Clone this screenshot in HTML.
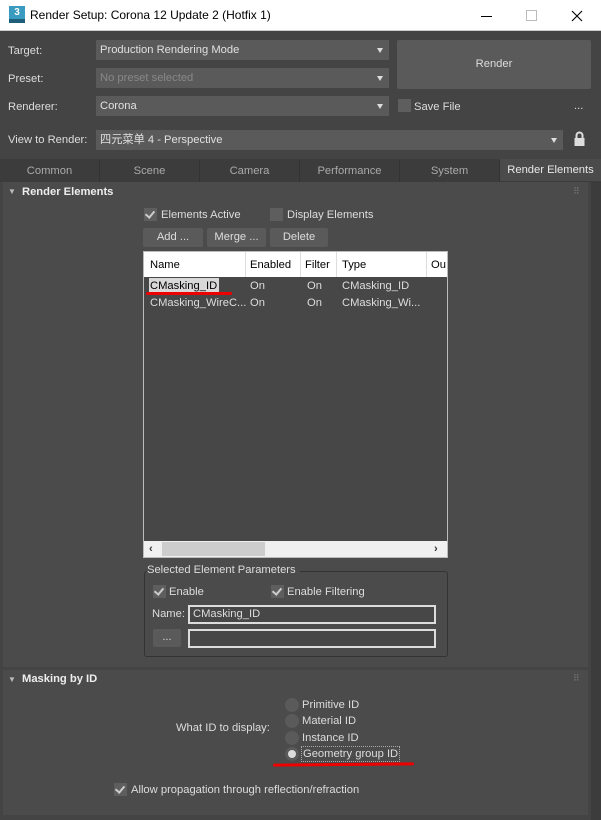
<!DOCTYPE html>
<html><head><meta charset="utf-8"><style>
*{box-sizing:border-box;margin:0;padding:0}
body{width:601px;height:820px;background:#444;font-family:"Liberation Sans","Noto Sans CJK SC",sans-serif;font-size:11.2px;color:#ddd;position:relative;overflow:hidden}
.a{position:absolute}
.t{position:absolute;white-space:nowrap;line-height:14px}
.dd{position:absolute;background:#5a5a5a;height:20px;padding-left:4px;line-height:20px;color:#e0e0e0}
.dd:after{content:"";position:absolute;right:6px;top:8px;border-left:3.5px solid transparent;border-right:3.5px solid transparent;border-top:5px solid #ddd}
.cb{position:absolute;width:13px;height:13px;background:#5e5e5e}
.cb.on:after{content:"";position:absolute;left:3px;top:1px;width:4px;height:7px;border-right:2px solid #ccc;border-bottom:2px solid #ccc;transform:rotate(40deg)}
.btn{position:absolute;background:#5a5a5a;height:19px;line-height:19px;text-align:center;color:#ddd;border-radius:2px}
.rad{position:absolute;width:14px;height:14px;border-radius:50%;background:#5a5a5a}
.tab{position:absolute;top:160px;height:22px;line-height:22px;text-align:center;color:#aaa;width:100px;border-right:1px solid #333}
.inp{position:absolute;border:2px solid #ddd;background:#474747;height:19px;padding-left:3px;line-height:15px}
</style></head><body>
<div class="a" style="left:0;top:0;width:601px;height:31px;background:#fff;border-bottom:1px solid #ccc"></div>
<div class="a" style="left:9px;top:6px;width:16px;height:17px;background:#3a9bc0;color:#fff;font-size:10px;font-weight:bold;text-align:center;line-height:13px">3<div style="position:absolute;left:0;bottom:0;width:16px;height:4px;background:#1e5e7a"></div></div>
<div class="t" style="left:30px;top:8px;color:#000;font-size:12px">Render Setup: Corona 12 Update 2 (Hotfix 1)</div>
<div class="a" style="left:481px;top:16px;width:11px;height:1px;background:#000"></div>
<div class="a" style="left:526px;top:10px;width:11px;height:11px;border:1px solid #bbb"></div>
<svg class="a" style="left:571px;top:10px" width="12" height="12"><path d="M1 1L11 11M11 1L1 11" stroke="#000" stroke-width="1.1"/></svg>

<div class="t" style="left:8px;top:44px">Target:</div>
<div class="dd" style="left:96px;top:40px;width:293px">Production Rendering Mode</div>
<div class="t" style="left:8px;top:72px">Preset:</div>
<div class="dd" style="left:96px;top:68px;width:293px;color:#888">No preset selected</div>
<div class="t" style="left:8px;top:100px">Renderer:</div>
<div class="dd" style="left:96px;top:96px;width:293px">Corona</div>
<div class="btn" style="left:397px;top:40px;width:194px;height:49px;line-height:49px">Render</div>
<div class="cb" style="left:398px;top:99px"></div>
<div class="t" style="left:414px;top:100px">Save File</div>
<div class="t" style="left:574px;top:99px">...</div>
<div class="t" style="left:8px;top:133px">View to Render:</div>
<div class="dd" style="left:96px;top:130px;width:467px">四元菜单 4 - Perspective</div>
<svg class="a" style="left:573px;top:131px" width="13" height="16"><path d="M3.5 7V4.5a3 3 0 0 1 6 0V7" stroke="#ddd" stroke-width="2" fill="none"/><rect x="1.5" y="7" width="10" height="8" fill="#ddd"/></svg>

<div class="a" style="left:0;top:159px;width:601px;height:23px;background:#3c3c3c"></div>
<div class="tab" style="left:0">Common</div>
<div class="tab" style="left:100px">Scene</div>
<div class="tab" style="left:200px">Camera</div>
<div class="tab" style="left:300px">Performance</div>
<div class="tab" style="left:400px">System</div>
<div class="tab" style="left:500px;width:101px;background:#4b4b4b;color:#e8e8e8;top:159px;border:none">Render Elements</div>

<div class="a" style="left:3px;top:182px;width:585px;height:485px;background:#4b4b4b"></div>
<div class="a" style="left:591px;top:182px;width:10px;height:638px;background:#3c3c3c"></div>
<div class="t" style="left:8px;top:185px;font-size:8px;color:#bbb">▼</div>
<div class="t" style="left:22px;top:185px;font-weight:bold;color:#eee">Render Elements</div>
<div class="t" style="left:573px;top:184px;color:#777;font-size:9px">⠿</div>
<div class="cb on" style="left:144px;top:208px"></div>
<div class="t" style="left:161px;top:208px">Elements Active</div>
<div class="cb" style="left:270px;top:208px"></div>
<div class="t" style="left:287px;top:208px">Display Elements</div>
<div class="btn" style="left:143px;top:228px;width:60px">Add ...</div>
<div class="btn" style="left:207px;top:228px;width:59px">Merge ...</div>
<div class="btn" style="left:270px;top:228px;width:58px">Delete</div>

<div class="a" style="left:143px;top:251px;width:305px;height:307px;border:1px solid #bbb;background:#474747;overflow:hidden">
<div class="a" style="left:0;top:0;width:303px;height:25px;background:#fff;color:#000"></div>
<div class="a" style="left:101px;top:0;width:1px;height:25px;background:#ddd"></div>
<div class="a" style="left:156px;top:0;width:1px;height:25px;background:#ddd"></div>
<div class="a" style="left:192px;top:0;width:1px;height:25px;background:#ddd"></div>
<div class="a" style="left:282px;top:0;width:1px;height:25px;background:#ddd"></div>
<div class="t" style="left:6px;top:6px;color:#000">Name</div>
<div class="t" style="left:106px;top:6px;color:#000">Enabled</div>
<div class="t" style="left:161px;top:6px;color:#000">Filter</div>
<div class="t" style="left:198px;top:6px;color:#000">Type</div>
<div class="t" style="left:287px;top:6px;color:#000">Ou</div>
<div class="a" style="left:5px;top:26px;width:70px;height:15px;background:#d8d8d8"></div>
<div class="t" style="left:6px;top:27px;color:#000">CMasking_ID</div>
<div class="a" style="left:2px;top:40px;width:86px;height:3px;background:#e00;border-radius:2px"></div>
<div class="t" style="left:106px;top:27px">On</div><div class="t" style="left:163px;top:27px">On</div><div class="t" style="left:198px;top:27px">CMasking_ID</div>
<div class="t" style="left:6px;top:44px">CMasking_WireC...</div>
<div class="t" style="left:106px;top:44px">On</div><div class="t" style="left:163px;top:44px">On</div><div class="t" style="left:198px;top:44px">CMasking_Wi...</div>
<div class="a" style="left:0;top:289px;width:303px;height:16px;background:#f0f0f0"></div>
<div class="a" style="left:18px;top:290px;width:103px;height:14px;background:#cdcdcd"></div>
<div class="t" style="left:5px;top:290px;color:#333;font-weight:bold">‹</div>
<div class="t" style="left:290px;top:290px;color:#333;font-weight:bold">›</div>
</div>

<div class="a" style="left:144px;top:571px;width:304px;height:86px;border:1px solid #333;border-radius:3px"></div>
<div class="t" style="left:147px;top:563px;background:#4b4b4b;padding-right:4px">Selected Element Parameters</div>
<div class="cb on" style="left:153px;top:585px"></div>
<div class="t" style="left:169px;top:585px">Enable</div>
<div class="cb on" style="left:271px;top:585px"></div>
<div class="t" style="left:287px;top:585px">Enable Filtering</div>
<div class="t" style="left:152px;top:607px">Name:</div>
<div class="inp" style="left:188px;top:605px;width:248px">CMasking_ID</div>
<div class="btn" style="left:153px;top:629px;width:28px;height:18px;line-height:16px">...</div>
<div class="inp" style="left:188px;top:629px;width:248px"></div>

<div class="a" style="left:3px;top:670px;width:585px;height:145px;background:#4b4b4b"></div>
<div class="t" style="left:8px;top:673px;font-size:8px;color:#bbb">▼</div>
<div class="t" style="left:22px;top:672px;font-weight:bold;color:#eee">Masking by ID</div>
<div class="t" style="left:573px;top:671px;color:#777;font-size:9px">⠿</div>
<div class="t" style="left:176px;top:721px">What ID to display:</div>
<div class="rad" style="left:285px;top:698px"></div><div class="t" style="left:302px;top:698px">Primitive ID</div>
<div class="rad" style="left:285px;top:714px"></div><div class="t" style="left:302px;top:714px">Material ID</div>
<div class="rad" style="left:285px;top:731px"></div><div class="t" style="left:302px;top:731px">Instance ID</div>
<div class="rad" style="left:285px;top:747px"><div style="position:absolute;left:3px;top:3px;width:8px;height:8px;border-radius:50%;background:#ddd"></div></div>
<div class="t" style="left:301px;top:746px;border:1px dotted #aaa;padding:0 1px">Geometry group ID</div>
<div class="a" style="left:273px;top:763px;width:141px;height:3px;background:#e00;border-radius:2px;transform:rotate(-0.5deg)"></div>
<div class="cb on" style="left:114px;top:783px"></div>
<div class="t" style="left:131px;top:783px">Allow propagation through reflection/refraction</div>
</body></html>
